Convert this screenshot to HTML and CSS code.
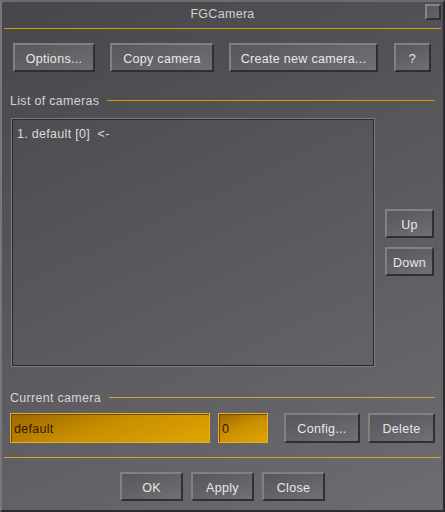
FILE: index.html
```html
<!DOCTYPE html>
<html>
<head>
<meta charset="utf-8">
<title>FGCamera</title>
<link rel="stylesheet" href="styles.css">
</head>
<body>
<div class="dialog">
  <div class="titlebar">
    <span></span>
    <span class="title">FGCamera</span>
    <span class="closebox"></span>
  </div>
  <div class="hline"></div>

  <div class="toprow">
    <button class="btn w-options">Options...</button>
    <button class="btn w-copy">Copy camera</button>
    <button class="btn w-create">Create new camera...</button>
    <button class="btn w-help">?</button>
  </div>

  <div class="section">
    <span class="section-label">List of cameras</span>
    <span class="section-line"></span>
  </div>

  <div class="listrow">
    <div class="listbox">
      <div class="listbox-inner">
        <div class="item">1. default [0]&nbsp;&nbsp;&lt;-</div>
      </div>
    </div>
    <div class="updown">
      <button class="btn w-side">Up</button>
      <button class="btn w-side">Down</button>
    </div>
  </div>

  <div class="section section-current">
    <span class="section-label">Current camera</span>
    <span class="section-line line-yellow"></span>
  </div>

  <div class="fieldrow">
    <div class="field w-name">default</div>
    <div class="field w-index">0</div>
    <button class="btn w-config">Config...</button>
    <button class="btn w-delete">Delete</button>
  </div>

  <div class="hline hline-bottom"></div>

  <div class="bottomrow">
    <button class="btn w-bottom">OK</button>
    <button class="btn w-bottom">Apply</button>
    <button class="btn w-bottom">Close</button>
  </div>
</div>
</body>
</html>
```

FILE: styles.css
```css
html, body {
  margin: 0;
  padding: 0;
  background: #2e2e32;
}

.dialog {
  box-sizing: border-box;
  width: 445px;
  height: 512px;
  border-left: 2px solid #77777c;
  border-top: 2px solid #6a6a6f;
  border-right: 2px solid #2c2c30;
  border-bottom: 2px solid #2c2c30;
  background: linear-gradient(155deg, #47474b 0%, #58585c 45%, #6d6c71 100%);
  font-family: "Liberation Sans", Arial, sans-serif;
  font-size: 12.5px;
  color: #d8d8d8;
  display: flex;
  flex-direction: column;
}

.titlebar {
  height: 26px;
  display: grid;
  grid-template-columns: 1fr auto 1fr;
  align-items: start;
}

.title {
  padding-top: 4px;
  line-height: 16px;
  color: #cfcfd2;
  letter-spacing: 0.3px;
}

.closebox {
  justify-self: end;
  margin-top: 2px;
  margin-right: 2px;
  box-sizing: border-box;
  width: 16px;
  height: 16px;
  border-top: 2px solid #85858a;
  border-left: 2px solid #85858a;
  border-right: 2px solid #323236;
  border-bottom: 2px solid #323236;
  background: linear-gradient(135deg, #55555a, #66666b);
}

.hline {
  height: 1px;
  margin: 0 2px;
  background: #d99a00;
}

.btn {
  box-sizing: border-box;
  height: 29px;
  padding: 2px 0 0 0;
  margin: 0;
  font-family: "Liberation Sans", Arial, sans-serif;
  font-size: 12.5px;
  color: #e8e8ea;
  letter-spacing: 0.3px;
  border-top: 2px solid #808085;
  border-left: 2px solid #808085;
  border-right: 2px solid #303034;
  border-bottom: 2px solid #303034;
  background: linear-gradient(160deg, #57575c 0%, #626267 50%, #717075 100%);
}

.toprow {
  margin-top: 14px;
  padding-left: 11px;
  display: flex;
}

.w-options { width: 82px; }
.w-copy { width: 104px; margin-left: 15px; }
.w-create { width: 149px; margin-left: 15px; }
.w-help { width: 37px; margin-left: 16px; }

.section {
  margin-top: 20px;
  height: 16px;
  padding: 0 8px;
  display: flex;
  align-items: center;
}

.section-label {
  line-height: 16px;
  padding-top: 1px;
  color: #d4d4d6;
  letter-spacing: 0.3px;
}

.section-line {
  flex: 1;
  height: 1px;
  margin-left: 8px;
  background: #d99a00;
}

.line-yellow {
  background: #d8a522;
}

.listrow {
  margin-top: 10px;
  height: 249px;
  padding-left: 9px;
  display: flex;
  align-items: center;
}

.listbox {
  box-sizing: border-box;
  width: 364px;
  height: 249px;
  border: 1px solid #7d7c81;
}

.listbox-inner {
  box-sizing: border-box;
  height: 100%;
  border: 1px solid #2a2a2e;
  padding: 6px 0 0 4px;
}

.item {
  line-height: 16px;
  color: #dcdcde;
  letter-spacing: 0.3px;
}

.updown {
  margin-left: 10px;
  display: flex;
  flex-direction: column;
  gap: 9px;
}

.w-side { width: 49px; }

.section-current {
  margin-top: 22px;
}

.fieldrow {
  margin-top: 8px;
  padding-left: 8px;
  display: flex;
  align-items: center;
}

.field {
  box-sizing: border-box;
  height: 30px;
  border: 1px solid #e6b020;
  box-shadow: inset 1px 1px 0 #6f4c00;
  background: linear-gradient(160deg, #9c6700 0%, #c88e00 45%, #e0a400 100%);
  color: #3a1600;
  line-height: 28px;
  padding: 1px 0 0 3px;
  letter-spacing: 0.3px;
}

.w-name { width: 200px; }
.w-index { width: 50px; margin-left: 8px; }
.w-config { width: 76px; height: 30px; margin-left: 16px; }
.w-delete { width: 67px; height: 30px; margin-left: 8px; }

.hline-bottom {
  margin-top: 14px;
  background: #d8a522;
}

.bottomrow {
  margin-top: 14px;
  display: flex;
  justify-content: center;
  gap: 8px;
}

.w-bottom { width: 63px; }
```
